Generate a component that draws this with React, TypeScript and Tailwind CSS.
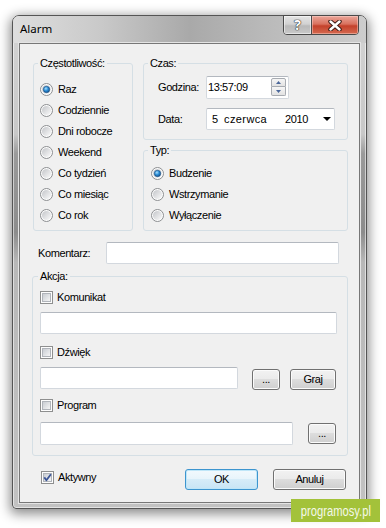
import React from 'react';

const Radio: React.FC<{ checked?: boolean }> = ({ checked }) => (
    <svg width="13" height="13" viewBox="0 0 13 13" className="shrink-0">
        <defs>
            <linearGradient id="radioFace" x1="0" y1="0" x2="1" y2="1">
                <stop offset="0" stopColor="#c3c5c9" />
                <stop offset="1" stopColor="#fbfbfb" />
            </linearGradient>
            <radialGradient id="radioDot" cx="0.4" cy="0.35" r="0.75">
                <stop offset="0" stopColor="#a8e0ff" />
                <stop offset="0.45" stopColor="#2d8fd8" />
                <stop offset="1" stopColor="#0c4680" />
            </radialGradient>
        </defs>
        <circle cx="6.5" cy="6.5" r="6" fill="#fdfdfd" stroke="#8c8e91" />
        <circle cx="6.5" cy="6.5" r="4.6" fill="url(#radioFace)" />
        {checked && <circle cx="6.5" cy="6.5" r="3.2" fill="url(#radioDot)" stroke="#1a4c7e" strokeWidth="0.6" />}
    </svg>
);

const Check: React.FC<{ checked?: boolean }> = ({ checked }) => (
    <svg width="13" height="13" viewBox="0 0 13 13" className="shrink-0">
        <defs>
            <linearGradient id="checkFace" x1="0" y1="0" x2="1" y2="1">
                <stop offset="0" stopColor="#c6cad0" />
                <stop offset="1" stopColor="#f8f8f8" />
            </linearGradient>
        </defs>
        <rect x="0.5" y="0.5" width="12" height="12" fill="#fdfdfd" stroke="#8e8f8f" />
        <rect x="2.5" y="2.5" width="8" height="8" fill="url(#checkFace)" stroke="#b0b4ba" />
        {checked && (
            <path d="M3.3 6.4 L5.4 9.3 L9.9 3.2" fill="none" stroke="#3b5596" strokeWidth="1.8" strokeLinejoin="round" />
        )}
    </svg>
);

const RadioRow: React.FC<{ label: string; checked?: boolean }> = ({ label, checked }) => (
    <div className="flex h-[21px] items-center gap-[5px]">
        <Radio checked={checked} />
        <span>{label}</span>
    </div>
);

const CheckRow: React.FC<{ label: string; checked?: boolean; className?: string }> = ({ label, checked, className }) => (
    <div className={`flex h-[13px] items-center gap-[4px] ${className ?? ''}`}>
        <Check checked={checked} />
        <span className="leading-[13px]">{label}</span>
    </div>
);

const Group: React.FC<{ title: string; className?: string; legendClass?: string; children: React.ReactNode }> = ({
    title,
    className,
    legendClass,
    children,
}) => (
    <fieldset className={`rounded-[3px] border border-[#d5dfe5] ${className ?? ''}`}>
        <legend className={`px-[2px] leading-[13px] ${legendClass ?? 'ml-[4px]'}`}>{title}</legend>
        {children}
    </fieldset>
);

const Field: React.FC<{ className?: string; children?: React.ReactNode }> = ({ className, children }) => (
    <div className={`rounded-[2px] border border-[#d3d8de] border-t-[#b3b8bf] bg-white ${className ?? ''}`}>{children}</div>
);

const Btn: React.FC<{ label: string; className?: string; primary?: boolean }> = ({ label, className, primary }) => (
    <div
        className={`flex h-[21px] items-center justify-center rounded-[3px] border ${
            primary
                ? 'border-[#3d95cf] bg-[linear-gradient(to_bottom,#f2f9fd_0%,#e8f4fb_45%,#d6ecf8_50%,#c8e5f5_100%)] shadow-[inset_0_0_0_1px_#bfe6f8]'
                : 'border-[#707070] bg-[linear-gradient(to_bottom,#f2f2f2_0%,#ebebeb_45%,#dddddd_50%,#cfcfcf_100%)] shadow-[inset_0_0_0_1px_#fbfbfb]'
        } ${className ?? ''}`}
    >
        {label}
    </div>
);

const Spin: React.FC = () => (
    <div className="mt-[1px] mr-[2px] ml-auto flex flex-col">
        <div className="flex h-[9px] w-[15px] items-center justify-center rounded-t-[2px] border border-[#a7abb1] bg-[linear-gradient(to_bottom,#f6f6f6,#e2e2e2)]">
            <svg width="5" height="3" viewBox="0 0 5 3">
                <path d="M0 3 L2.5 0 L5 3 Z" fill="#4b679a" />
            </svg>
        </div>
        <div className="flex h-[9px] w-[15px] items-center justify-center rounded-b-[2px] border border-t-0 border-[#a7abb1] bg-[linear-gradient(to_bottom,#f6f6f6,#e2e2e2)]">
            <svg width="5" height="3" viewBox="0 0 5 3">
                <path d="M0 0 L5 0 L2.5 3 Z" fill="#4b679a" />
            </svg>
        </div>
    </div>
);

export default function App() {
    return (
        <div className="relative h-[528px] w-[386px] overflow-hidden bg-white">
            <div className="mt-[15px] ml-[12px] flex h-[494px] w-[355px] flex-col rounded-t-[7px] rounded-b-[4px] border border-[#555555] bg-[linear-gradient(to_bottom,#d4d4d4_0%,#c8c8c8_24%,#9a9a9a_28%,#8c8c8c_44%,#b8b8b8_50%,#c2c2c2_100%)] shadow-[inset_0_0_0_1px_rgba(255,255,255,0.55),0_3px_12px_2px_rgba(0,0,0,0.45)]">
                {/* title bar */}
                <div className="flex h-[27px] shrink-0 items-start rounded-t-[6px] bg-[linear-gradient(to_right,#dedede_0%,#c9c9c9_25%,#a9a9a9_50%,#bababa_72%,#cdcdcd_100%)]">
                    <span className="pt-[5px] pl-[7px] font-['Noto_Sans',sans-serif] text-[11.5px] leading-[16px] text-black">
                        Alarm
                    </span>
                    <div className="-mt-[1px] mr-[7px] ml-auto flex h-[20px] overflow-hidden rounded-b-[4px] border border-[#4a4a4a]">
                        <div className="flex w-[27px] items-center justify-center bg-[linear-gradient(to_bottom,#e4e4e4_0%,#d2d2d2_45%,#b9b9b9_55%,#c9c9c9_100%)] font-['Noto_Sans',sans-serif] text-[14px] leading-none font-bold text-white shadow-[inset_0_0_0_1px_rgba(255,255,255,0.5)] [text-shadow:0_0_1px_#2a2a2a,0_0_1px_#2a2a2a,0_0_1px_#2a2a2a]">
                            ?
                        </div>
                        <div className="w-[1px] bg-[#4a4a4a]" />
                        <div className="flex w-[46px] items-center justify-center bg-[linear-gradient(to_bottom,#eaa69a_0%,#d9715e_45%,#c4412b_55%,#d56a50_100%)] shadow-[inset_0_0_0_1px_rgba(255,220,210,0.45)]">
                            <svg width="14" height="11" viewBox="0 0 14 11">
                                <path d="M2.5 1.5 L11.5 9.5 M11.5 1.5 L2.5 9.5" stroke="#3a1a14" strokeWidth="4.4" strokeLinecap="round" />
                                <path d="M2.5 1.5 L11.5 9.5 M11.5 1.5 L2.5 9.5" stroke="#ffffff" strokeWidth="2.4" strokeLinecap="round" />
                            </svg>
                        </div>
                    </div>
                </div>

                {/* client area */}
                <div className="mx-[6px] mb-[5px] flex flex-1 flex-col border border-[#777777] bg-[#f0f0f0] pt-[13px] pr-[11px] pb-[12px] pl-[12px] font-['Liberation_Sans',Arial,sans-serif] text-[11px] tracking-[-0.4px] text-black shadow-[0_0_0_1px_#e4e4e4]">
                    <div className="ml-[1px] flex gap-[10px]">
                        <Group title="Częstotliwość:" className="h-[174px] w-[100px]">
                            <div className="mt-[9px] pl-[6px]">
                                <RadioRow label="Raz" checked />
                                <RadioRow label="Codziennie" />
                                <RadioRow label="Dni robocze" />
                                <RadioRow label="Weekend" />
                                <RadioRow label="Co tydzień" />
                                <RadioRow label="Co miesiąc" />
                                <RadioRow label="Co rok" />
                            </div>
                        </Group>
                        <div className="flex w-[205px] flex-col gap-[4px]">
                            <Group title="Czas:" className="h-[83px]">
                                <div className="mt-[6px] flex items-center pl-[14px]">
                                    <span className="w-[48px]">Godzina:</span>
                                    <Field className="flex h-[23px] w-[83px] items-start">
                                        <span className="self-center pl-[1px]">13:57:09</span>
                                        <Spin />
                                    </Field>
                                </div>
                                <div className="mt-[9px] flex items-center pl-[14px]">
                                    <span className="w-[48px]">Data:</span>
                                    <Field className="flex h-[22px] w-[129px] items-center pl-[5px]">
                                        <span className="w-[12px] shrink-0">5</span>
                                        <span className="w-[61px] shrink-0 tracking-[0.4px]">czerwca</span>
                                        <span className="w-[38px] shrink-0">2010</span>
                                        <svg width="8" height="4" viewBox="0 0 8 4">
                                            <path d="M0 0 L8 0 L4 4 Z" fill="#000" />
                                        </svg>
                                    </Field>
                                </div>
                            </Group>
                            <Group title="Typ:" className="h-[87px]">
                                <div className="mt-[6px] pl-[7px]">
                                    <RadioRow label="Budzenie" checked />
                                    <RadioRow label="Wstrzymanie" />
                                    <RadioRow label="Wyłączenie" />
                                </div>
                            </Group>
                        </div>
                    </div>

                    <div className="mt-[11px] flex items-center">
                        <span className="ml-[6px] w-[68px]">Komentarz:</span>
                        <Field className="h-[22px] w-[233px]" />
                    </div>

                    <Group title="Akcja:" className="mt-[6px] h-[186px] w-[316px]" legendClass="ml-[5px]">
                        <div className="pl-[7px]">
                            <CheckRow label="Komunikat" className="mt-[8px]" />
                            <Field className="mt-[8px] h-[22px] w-[297px]" />
                            <CheckRow label="Dźwięk" className="mt-[12px]" />
                            <div className="mt-[8px] flex items-start">
                                <Field className="h-[22px] w-[198px]" />
                                <Btn label="..." className="mt-[2px] ml-[14px] w-[28px]" />
                                <Btn label="Graj" className="mt-[2px] ml-[10px] w-[46px]" />
                            </div>
                            <CheckRow label="Program" className="mt-[9px]" />
                            <div className="mt-[10px] flex items-start">
                                <Field className="h-[23px] w-[253px]" />
                                <Btn label="..." className="mt-[1px] ml-[15px] w-[28px]" />
                            </div>
                        </div>
                    </Group>

                    <div className="mt-[13px] flex items-start">
                        <CheckRow label="Aktywny" checked className="mt-[2px] ml-[9px]" />
                        <Btn label="OK" primary className="ml-auto w-[73px]" />
                        <Btn label="Anuluj" className="mr-[2px] ml-[15px] w-[73px]" />
                    </div>
                </div>
            </div>

            <div className="absolute top-[499px] left-[291px] flex h-[23px] w-[89px] items-center justify-center bg-[#a3c23a]">
                <span className="inline-block scale-x-[0.8] font-['Liberation_Sans',Arial,sans-serif] text-[14px] leading-none text-[#f4f8e8]">
                    programosy.pl
                </span>
            </div>
        </div>
    );
}
